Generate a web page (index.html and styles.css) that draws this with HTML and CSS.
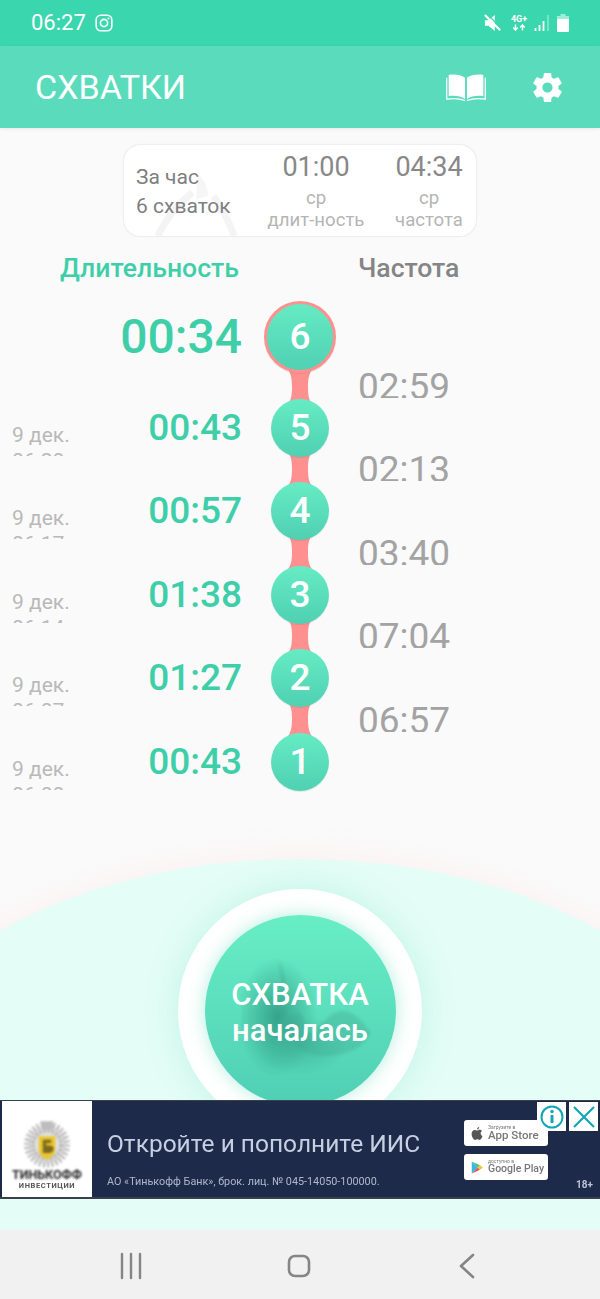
FILE: index.html
```html
<!DOCTYPE html>
<html lang="ru">
<head>
<meta charset="utf-8">
<title>Схватки</title>
<link rel="stylesheet" href="styles.css">
</head>
<body>
<div class="app">
  <header class="status">
    <div class="status-left">
      <span class="clock">06:27</span>
      <svg class="ig" viewBox="0 0 18 18"><rect x="1.200" y="1.200" width="15.600" height="15.600" rx="4.500" fill="none" stroke="#fff" stroke-width="1.600"/><circle cx="9" cy="9" r="3.600" fill="none" stroke="#fff" stroke-width="1.600"/><circle cx="13.400" cy="4.600" r="1" fill="#fff"/></svg>
    </div>
    <div class="status-right">
      <svg class="mute" viewBox="0 0 20 20"><path d="M1 7h4l7-6v18l-7-6H1z" fill="#fff"/><path d="M1 1l17 17" stroke="#fff" stroke-width="2.400"/><path d="M3.500 0l16 16" stroke="#3ad6ae" stroke-width="1.400"/></svg>
      <div class="net"><span class="net-label">4G+</span><svg class="net-arrows" viewBox="0 0 16 7"><path d="M4 0v6M1.500 3.500L4 6.500l2.500-3M12 7V1M9.500 3.500L12 .5l2.500 3" fill="none" stroke="#fff" stroke-width="1.600"/></svg></div>
      <svg class="signal" viewBox="0 0 16 18"><path d="M1.500 17v-3M5.500 17v-6M9.500 17V7" stroke="#fff" stroke-width="1.800"/><path d="M14 17V1" stroke="#8ee8d0" stroke-width="1.500"/></svg>
      <svg class="battery" viewBox="0 0 12 18"><path d="M3.500 0h5v2h-5z" fill="#9beeda"/><path d="M0 2h12v3H0z" fill="#9beeda"/><path d="M0 5h12v12a1 1 0 0 1-1 1H1a1 1 0 0 1-1-1z" fill="#fff"/></svg>
    </div>
  </header>

  <div class="appbar">
    <h1 class="title">СХВАТКИ</h1>
    <div class="appbar-actions">
      <svg class="book" viewBox="0 0 42 28"><path d="M20 4C16 1 9 0 3 1v22c6-1 13 0 17 3z" fill="#fff"/><path d="M22 4c4-3 11-4 17-3v22c-6-1-13 0-17 3z" fill="#fff"/><path d="M1 4v22c7-1 14-.5 19 1.500M41 4v22c-7-1-14-.5-19 1.500" fill="none" stroke="#fff" stroke-width="1.300"/></svg>
      <svg class="gear" viewBox="0 0 24 24"><path fill="#fff" d="M19.430 12.980c.040-.320.070-.640.070-.980s-.030-.660-.070-.980l2.110-1.650c.190-.150.240-.420.120-.640l-2-3.460c-.120-.220-.390-.300-.610-.220l-2.490 1c-.520-.400-1.080-.730-1.690-.980l-.380-2.650C14.460 2.180 14.250 2 14 2h-4c-.250 0-.460.180-.490.420l-.380 2.650c-.610.250-1.170.590-1.690.980l-2.490-1c-.230-.090-.490 0-.610.220l-2 3.460c-.130.220-.070.490.120.640l2.110 1.650c-.040.320-.070.650-.070.980s.030.660.070.980l-2.110 1.650c-.190.150-.240.420-.120.640l2 3.460c.120.220.390.300.610.220l2.490-1c.520.400 1.080.730 1.690.980l.380 2.650c.030.240.240.420.490.420h4c.250 0 .460-.180.490-.420l.380-2.650c.610-.250 1.170-.590 1.690-.980l2.490 1c.230.090.490 0 .610-.220l2-3.460c.120-.220.070-.490-.120-.640l-2.110-1.650zM12 15.500c-1.930 0-3.500-1.570-3.500-3.500s1.570-3.500 3.500-3.500 3.500 1.570 3.500 3.500-1.570 3.500-3.500 3.500z"/></svg>
    </div>
  </div>

  <main class="content">
    <section class="summary">
      <svg class="summary-figure" viewBox="0 0 100 70"><path d="M6 70C16 50 30 32 46 20M70 24c10 14 18 30 24 46" fill="none" stroke="#f4f4f4" stroke-width="8"/><path d="M52 0c8 3 10 12 12 24l-14 4z" fill="#f6f6f6"/></svg>
      <div class="summary-main"><span class="summary-line">За час</span><span class="summary-line">6 схваток</span></div>
      <div class="stat stat-dur"><span class="stat-value">01:00</span><span class="stat-label">ср</span><span class="stat-label">длит-ность</span></div>
      <div class="stat stat-freq"><span class="stat-value">04:34</span><span class="stat-label">ср</span><span class="stat-label">частота</span></div>
    </section>

    <div class="columns">
      <span class="col-dur">Длительность</span>
      <span class="col-freq">Частота</span>
    </div>

    <ol class="timeline">
      <li class="row row-current">
        <div class="date"></div>
        <div class="dur">00:34</div>
        <div class="node"><svg class="link" viewBox="0 0 30 42" preserveAspectRatio="none"><path d="M0 0C6 6 7 12 7 21 7 30 6 36 0 42H30C24 36 23 30 23 21 23 12 24 6 30 0z"/></svg><span class="dot">6</span></div>
        <div class="freq">02:59</div>
      </li>
      <li class="row">
        <div class="date">9 дек.<br>06:20</div>
        <div class="dur">00:43</div>
        <div class="node"><svg class="link" viewBox="0 0 30 42" preserveAspectRatio="none"><path d="M0 0C6 6 7 12 7 21 7 30 6 36 0 42H30C24 36 23 30 23 21 23 12 24 6 30 0z"/></svg><span class="dot">5</span></div>
        <div class="freq">02:13</div>
      </li>
      <li class="row">
        <div class="date">9 дек.<br>06:17</div>
        <div class="dur">00:57</div>
        <div class="node"><svg class="link" viewBox="0 0 30 42" preserveAspectRatio="none"><path d="M0 0C6 6 7 12 7 21 7 30 6 36 0 42H30C24 36 23 30 23 21 23 12 24 6 30 0z"/></svg><span class="dot">4</span></div>
        <div class="freq">03:40</div>
      </li>
      <li class="row">
        <div class="date">9 дек.<br>06:14</div>
        <div class="dur">01:38</div>
        <div class="node"><svg class="link" viewBox="0 0 30 42" preserveAspectRatio="none"><path d="M0 0C6 6 7 12 7 21 7 30 6 36 0 42H30C24 36 23 30 23 21 23 12 24 6 30 0z"/></svg><span class="dot">3</span></div>
        <div class="freq">07:04</div>
      </li>
      <li class="row">
        <div class="date">9 дек.<br>06:07</div>
        <div class="dur">01:27</div>
        <div class="node"><svg class="link" viewBox="0 0 30 42" preserveAspectRatio="none"><path d="M0 0C6 6 7 12 7 21 7 30 6 36 0 42H30C24 36 23 30 23 21 23 12 24 6 30 0z"/></svg><span class="dot">2</span></div>
        <div class="freq">06:57</div>
      </li>
      <li class="row row-first">
        <div class="date">9 дек.<br>06:00</div>
        <div class="dur">00:43</div>
        <div class="node"><span class="dot">1</span></div>
      </li>
    </ol>

    <section class="action">
      <div class="arch"></div>
      <div class="ring">
        <button class="start">
          <svg class="start-shade" viewBox="0 0 130 130"><defs><radialGradient id="sh"><stop offset="0" stop-color="#2f9a82" stop-opacity=".85"/><stop offset="1" stop-color="#2f9a82" stop-opacity="0"/></radialGradient></defs><ellipse cx="36" cy="62" rx="40" ry="60" fill="url(#sh)"/><ellipse cx="60" cy="90" rx="46" ry="30" fill="url(#sh)" opacity=".5"/></svg>
          <svg class="start-figure" viewBox="0 0 130 130"><path d="M38 6C46 22 48 40 40 58l-2 4c8 2 12 0 16-4 6-2 8 2 9 8 1 8 3 12 8 12 10-10 20-22 30-22 12 0 20 10 29 22-8 16-30 26-58 22C50 96 44 70 38 6z" fill="#3ea68f" opacity=".35"/></svg>
          <span class="start-text">СХВАТКА<br>началась</span>
        </button>
      </div>
    </section>
  </main>

  <aside class="ad">
    <div class="ad-logo">
      <svg class="emblem" viewBox="0 0 60 60"><circle cx="30" cy="32" r="23" fill="#e2e2e2"/><circle cx="30" cy="32" r="24" fill="none" stroke="#a9a9a9" stroke-width="7" stroke-dasharray="2 3"/><circle cx="30" cy="32" r="17" fill="none" stroke="#b5b5b5" stroke-width="5" stroke-dasharray="3 2"/><path d="M20 22h20v16c0 6-5 9-10 12-5-3-10-6-10-12z" fill="#ecc62e"/><path d="M25 26h10v4h-6v3h4c3 0 5 2 5 4s-2 5-5 5h-8z" fill="#7b6a20"/><path d="M22 4h16l-2 10H24z" fill="#bdbdbd"/></svg>
      <span class="ad-brand">ТИНЬКОФФ</span>
      <span class="ad-sub">ИНВЕСТИЦИИ</span>
    </div>
    <div class="ad-body">
      <span class="ad-headline">Откройте и пополните ИИС</span>
      <span class="ad-legal">АО «Тинькофф Банк», брок. лиц. № 045-14050-100000.</span>
    </div>
    <div class="ad-stores">
      <div class="badge"><svg class="badge-icon" viewBox="0 0 16 18"><path d="M11 0c0 2-1.500 3.500-3 3.500C8 2 9.500.4 11 0zM8 5c1 0 2-1 3.500-1 1.200 0 2.500.6 3.200 1.800-2.800 1.600-2.300 5.400.6 6.500C14.400 14.800 13 17.500 11.500 17.500c-1 0-1.800-.7-3-.7s-2 .7-3 .7C3.500 17.500.8 13 .8 9.500.8 6 3 4.200 5 4.200 6.200 4.200 7.200 5 8 5z" fill="#555"/></svg><div class="badge-text"><small>Загрузите в</small><b>App Store</b></div></div>
      <div class="badge"><svg class="badge-icon" viewBox="0 0 16 18"><path d="M1 1l8 8-8 8z" fill="#3bb6e8"/><path d="M1 1l11 5-3 3z" fill="#48c774"/><path d="M1 17l11-5-3-3z" fill="#e8504a"/><path d="M12 6l4 3-4 3-3-3z" fill="#f5c33b"/></svg><div class="badge-text"><small>доступно в</small><b class="badge-gp">Google Play</b></div></div>
    </div>
    <span class="ad-age">18+</span>
    <div class="ad-controls">
      <span class="ad-btn"><svg viewBox="0 0 24 24"><circle cx="12" cy="12" r="10.500" fill="none" stroke="#12a5b5" stroke-width="2"/><path d="M12 10v8" stroke="#12a5b5" stroke-width="3"/><circle cx="12" cy="6.500" r="1.700" fill="#12a5b5"/></svg></span>
      <span class="ad-btn"><svg viewBox="0 0 24 24"><path d="M2 2l20 20M22 2L2 22" stroke="#12a5b5" stroke-width="2.200"/></svg></span>
    </div>
  </aside>

  <nav class="navbar">
    <svg class="nav-icon" viewBox="0 0 24 28"><path d="M3 2v24M12 2v24M21 2v24" stroke="#858585" stroke-width="2.400" stroke-linecap="round"/></svg>
    <svg class="nav-icon" viewBox="0 0 24 28"><rect x="2" y="4" width="20" height="20" rx="6" fill="none" stroke="#858585" stroke-width="2.600"/></svg>
    <svg class="nav-icon" viewBox="0 0 24 28"><path d="M18 3L6 14l12 11" fill="none" stroke="#858585" stroke-width="2.600" stroke-linecap="round" stroke-linejoin="round"/></svg>
  </nav>
</div>
</body>
</html>
```
FILE: styles.css
```css
* { box-sizing: border-box; }
html, body { margin: 0; padding: 0; }
body { font-family: Roboto, "Noto Sans", sans-serif; background: #fafafa; }
.app { width: 600px; height: 1299px; display: flex; flex-direction: column; overflow: hidden; position: relative; }

.status { height: 46px; flex: none; background: #3ad6ae; display: flex; justify-content: space-between; align-items: center; padding: 0 31px; color: #fff; }
.status-left { display: flex; align-items: center; gap: 9px; }
.clock { font-size: 22px; line-height: 1; }
.ig { width: 18px; height: 18px; margin-top: -1px; }
.status-right { display: flex; align-items: center; gap: 7px; margin-top: -1px; }
.mute { width: 18px; height: 18px; margin-right: 2px; }
.net { display: flex; flex-direction: column; align-items: center; width: 16px; }
.net-label { font-size: 9px; line-height: 10px; font-weight: 700; white-space: nowrap; }
.net-arrows { width: 14px; height: 7px; }
.signal { width: 16px; height: 18px; }
.battery { width: 12px; height: 18px; }

.appbar { height: 82px; flex: none; background: #5adcbc; display: flex; justify-content: space-between; align-items: center; padding: 0 35px 0 35px; box-shadow: 0 1px 3px rgba(0,0,0,.08); position: relative; z-index: 2; }
.title { margin: 0; font-size: 34px; font-weight: 400; color: #fff; }
.appbar-actions { display: flex; align-items: center; gap: 43px; }
.book { width: 42px; height: 27px; }
.gear { width: 35px; height: 35px; }

.content { flex: 1; display: flex; flex-direction: column; align-items: stretch; position: relative; min-height: 0; }

.summary { position: relative; overflow: hidden; align-self: center; margin-top: 17px; width: 352px; height: 91px; background: #fff; border-radius: 16px; box-shadow: 0 0 2px rgba(0,0,0,.18); display: flex; color: #8a8a8a; }
.summary-figure { position: absolute; left: 28px; top: 30px; width: 88px; height: 61px; }
.summary-main { position: relative; width: 137px; flex: none; padding: 18px 0 0 12px; display: flex; flex-direction: column; color: #7f7f7f; }
.summary-line { font-size: 21px; line-height: 29px; white-space: nowrap; }
.stat { position: relative; flex: none; display: flex; flex-direction: column; align-items: center; }
.stat-dur { width: 110px; }
.stat-freq { width: 90px; margin-left: 13px; }
.stat-value { font-size: 27px; line-height: 32px; margin-top: 6px; margin-bottom: 5px; color: #888; }
.stat-label { font-size: 18.600px; line-height: 21.500px; color: #b5b5b5; white-space: nowrap; }

.columns { position: relative; height: 40px; margin-top: 12px; font-size: 26.600px; line-height: 40px; display: flex; }
.col-dur { margin-left: 60px; width: 298px; color: #3ecfa9; font-weight: 500; }
.col-freq { color: #858585; font-weight: 500; }

.timeline { list-style: none; margin: 13px 0 0; padding: 0; position: relative; }
.row { height: 83.400px; display: grid; grid-template-columns: 100px 142px 116px 1fr; position: relative; }
.row-current { height: 97px; }
.row-first { height: 84px; }

.date { padding: 24px 0 0 12px; height: 58px; overflow: hidden; font-size: 21px; line-height: 26px; color: #b9b9b9; white-space: nowrap; }
.dur { font-size: 37px; font-weight: 500; line-height: 60px; color: #3ecfa9; text-align: right; white-space: nowrap; }
.row-current .dur { font-size: 48px; line-height: 72px; }

.node { display: flex; justify-content: center; align-items: flex-start; position: relative; }
.dot { position: relative; width: 58px; height: 58px; margin-top: 1px; border-radius: 50%; background: linear-gradient(#66ecc4, #4fd0b2); color: #fff; font-size: 37px; font-weight: 500; line-height: 58px; text-align: center; box-shadow: 0 1px 1px rgba(0,0,0,.08); z-index: 1; }
.row-current .dot { width: 72px; height: 72px; margin-top: 0; line-height: 66px; border: 3px solid #ff9090; background-origin: border-box; }
.link { position: absolute; left: 43px; top: 50px; width: 30px; height: 42px; fill: #ff9090; }
.row-current .link { top: 65px; }

.freq { height: 26px; align-self: end; overflow: hidden; font-size: 37px; line-height: 29px; color: #a3a3a3; white-space: nowrap; }

.action { flex: 1; position: relative; min-height: 0; }
.arch { position: absolute; left: -120px; right: -120px; top: 43px; height: 480px; border-radius: 50%; background: #e4fdf6; box-shadow: 0 -8px 24px rgba(255,235,235,.45); }
.ring { position: absolute; left: 178px; top: 73px; width: 244px; height: 244px; border-radius: 50%; background: #fff; box-shadow: 0 0 34px rgba(70,215,175,.22); display: flex; align-items: center; justify-content: center; }
.start { position: relative; width: 191px; height: 191px; border: 0; padding: 5px 0 0; border-radius: 50%; background: linear-gradient(#68eec5, #4fcfb4); box-shadow: 0 0 18px rgba(70,215,175,.4); color: #fff; font: 500 31px/36px Roboto, sans-serif; overflow: hidden; }
.start-shade { position: absolute; left: 36px; top: 40px; width: 130px; height: 130px; }
.start-figure { position: absolute; left: 36px; top: 40px; width: 130px; height: 130px; filter: blur(1.500px); }
.start-text { position: relative; display: block; }

.ad { position: absolute; left: 0; top: 1100px; width: 600px; height: 99px; background: #1e2a4a; border: 1px solid #3a3f4b; border-width: 1px 0 2px; z-index: 3; display: flex; }
.ad-logo { width: 90px; margin: 0 0 0 2px; flex: none; background: #fff; display: flex; flex-direction: column; align-items: center; padding-top: 17px; color: #2a2a2a; }
.emblem { width: 50px; height: 50px; filter: blur(.9px); }
.ad-brand { font-size: 12.500px; line-height: 13px; font-weight: 700; margin-top: 0; white-space: nowrap; filter: blur(.8px); }
.ad-sub { font-size: 7.500px; line-height: 9px; font-weight: 700; letter-spacing: .6px; white-space: nowrap; filter: blur(.7px); color: #555; }
.ad-body { position: relative; padding-left: 15px; width: 372px; flex: none; display: flex; flex-direction: column; filter: blur(.5px); }
.ad-headline { font-size: 24.500px; line-height: 28px; margin-top: 29px; color: #c6d0e2; white-space: nowrap; }
.ad-legal { font-size: 10.800px; line-height: 12px; margin-top: 18px; color: #aeb8cc; white-space: nowrap; }
.ad-stores { display: flex; flex-direction: column; gap: 8px; padding-top: 19px; filter: blur(.6px); }
.badge { width: 84px; height: 26px; background: #fff; border-radius: 3px; display: flex; align-items: center; gap: 5px; padding: 0 0 0 7px; color: #777; }
.badge-icon { width: 12px; height: 15px; flex: none; }
.badge-text { display: flex; flex-direction: column; line-height: 1; white-space: nowrap; }
.badge-text small { font-size: 5px; }
.badge-text b { font-size: 11.500px; font-weight: 500; }
.badge-text .badge-gp { font-size: 10.500px; }
.ad-age { position: absolute; right: 7px; top: 78px; font-size: 10px; line-height: 12px; color: #bcc5d6; font-weight: 700; filter: blur(.4px); }
.ad-controls { position: absolute; right: 2px; top: 1px; display: flex; gap: 3px; }
.ad-btn { width: 29px; height: 29px; background: #fff; display: flex; align-items: center; justify-content: center; }
.ad-btn svg { width: 24px; height: 24px; }

.navbar { height: 69px; flex: none; background: #f1f1f1; display: flex; position: relative; z-index: 2; justify-content: center; align-items: center; gap: 144px; padding: 3px 3px 0 0; }
.nav-icon { width: 24px; height: 28px; }
```
